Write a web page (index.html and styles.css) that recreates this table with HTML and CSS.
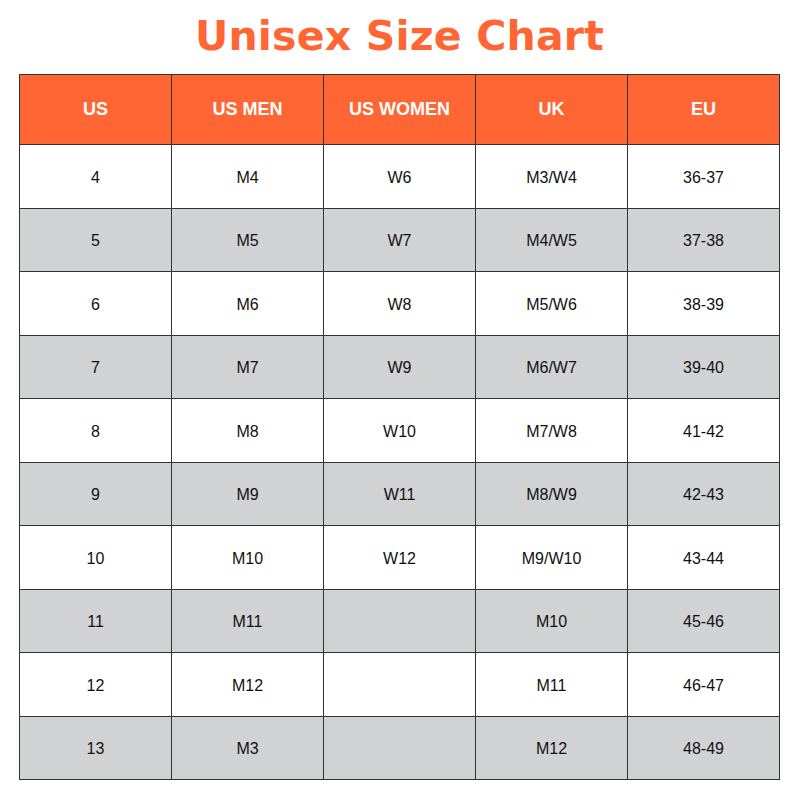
FILE: index.html
```html
<!DOCTYPE html>
<html>
<head>
<meta charset="utf-8">
<link rel="stylesheet" href="styles.css">
</head>
<body>
<div class="page">
  <h1 class="title">Unisex Size Chart</h1>
  <table class="chart">
    <thead>
      <tr><th>US</th><th>US MEN</th><th>US WOMEN</th><th>UK</th><th>EU</th></tr>
    </thead>
    <tbody>
      <tr><td>4</td><td>M4</td><td>W6</td><td>M3/W4</td><td>36-37</td></tr>
      <tr><td>5</td><td>M5</td><td>W7</td><td>M4/W5</td><td>37-38</td></tr>
      <tr><td>6</td><td>M6</td><td>W8</td><td>M5/W6</td><td>38-39</td></tr>
      <tr><td>7</td><td>M7</td><td>W9</td><td>M6/W7</td><td>39-40</td></tr>
      <tr><td>8</td><td>M8</td><td>W10</td><td>M7/W8</td><td>41-42</td></tr>
      <tr><td>9</td><td>M9</td><td>W11</td><td>M8/W9</td><td>42-43</td></tr>
      <tr><td>10</td><td>M10</td><td>W12</td><td>M9/W10</td><td>43-44</td></tr>
      <tr><td>11</td><td>M11</td><td></td><td>M10</td><td>45-46</td></tr>
      <tr><td>12</td><td>M12</td><td></td><td>M11</td><td>46-47</td></tr>
      <tr><td>13</td><td>M3</td><td></td><td>M12</td><td>48-49</td></tr>
    </tbody>
  </table>
</div>
</body>
</html>
```
FILE: styles.css
```css
html, body {
  margin: 0;
  padding: 0;
  background: #ffffff;
}
.page {
  width: 800px;
  height: 800px;
  padding-left: 19px;
  box-sizing: border-box;
}
.title {
  margin: 0;
  width: 761px;
  height: 74px;
  line-height: 72px;
  text-align: center;
  font-family: "DejaVu Sans", sans-serif;
  font-weight: bold;
  font-size: 41px;
  letter-spacing: 0.2px;
  color: #ff6633;
}
.chart {
  border-collapse: collapse;
  table-layout: fixed;
  width: 761px;
  font-family: "Liberation Sans", Arial, sans-serif;
  border: 1px solid #333333;
}
.chart th, .chart td {
  border: 1px solid #333333;
  text-align: center;
  padding: 0;
}
.chart th {
  background: #ff6633;
  color: #ffffff;
  font-weight: bold;
  font-size: 18px;
  height: 69px;
}
.chart td {
  color: #111111;
  font-size: 16px;
  height: 59.5px;
  padding-top: 3px;
}
.chart tbody tr:nth-child(even) td {
  background: #d1d2d4;
}
```
